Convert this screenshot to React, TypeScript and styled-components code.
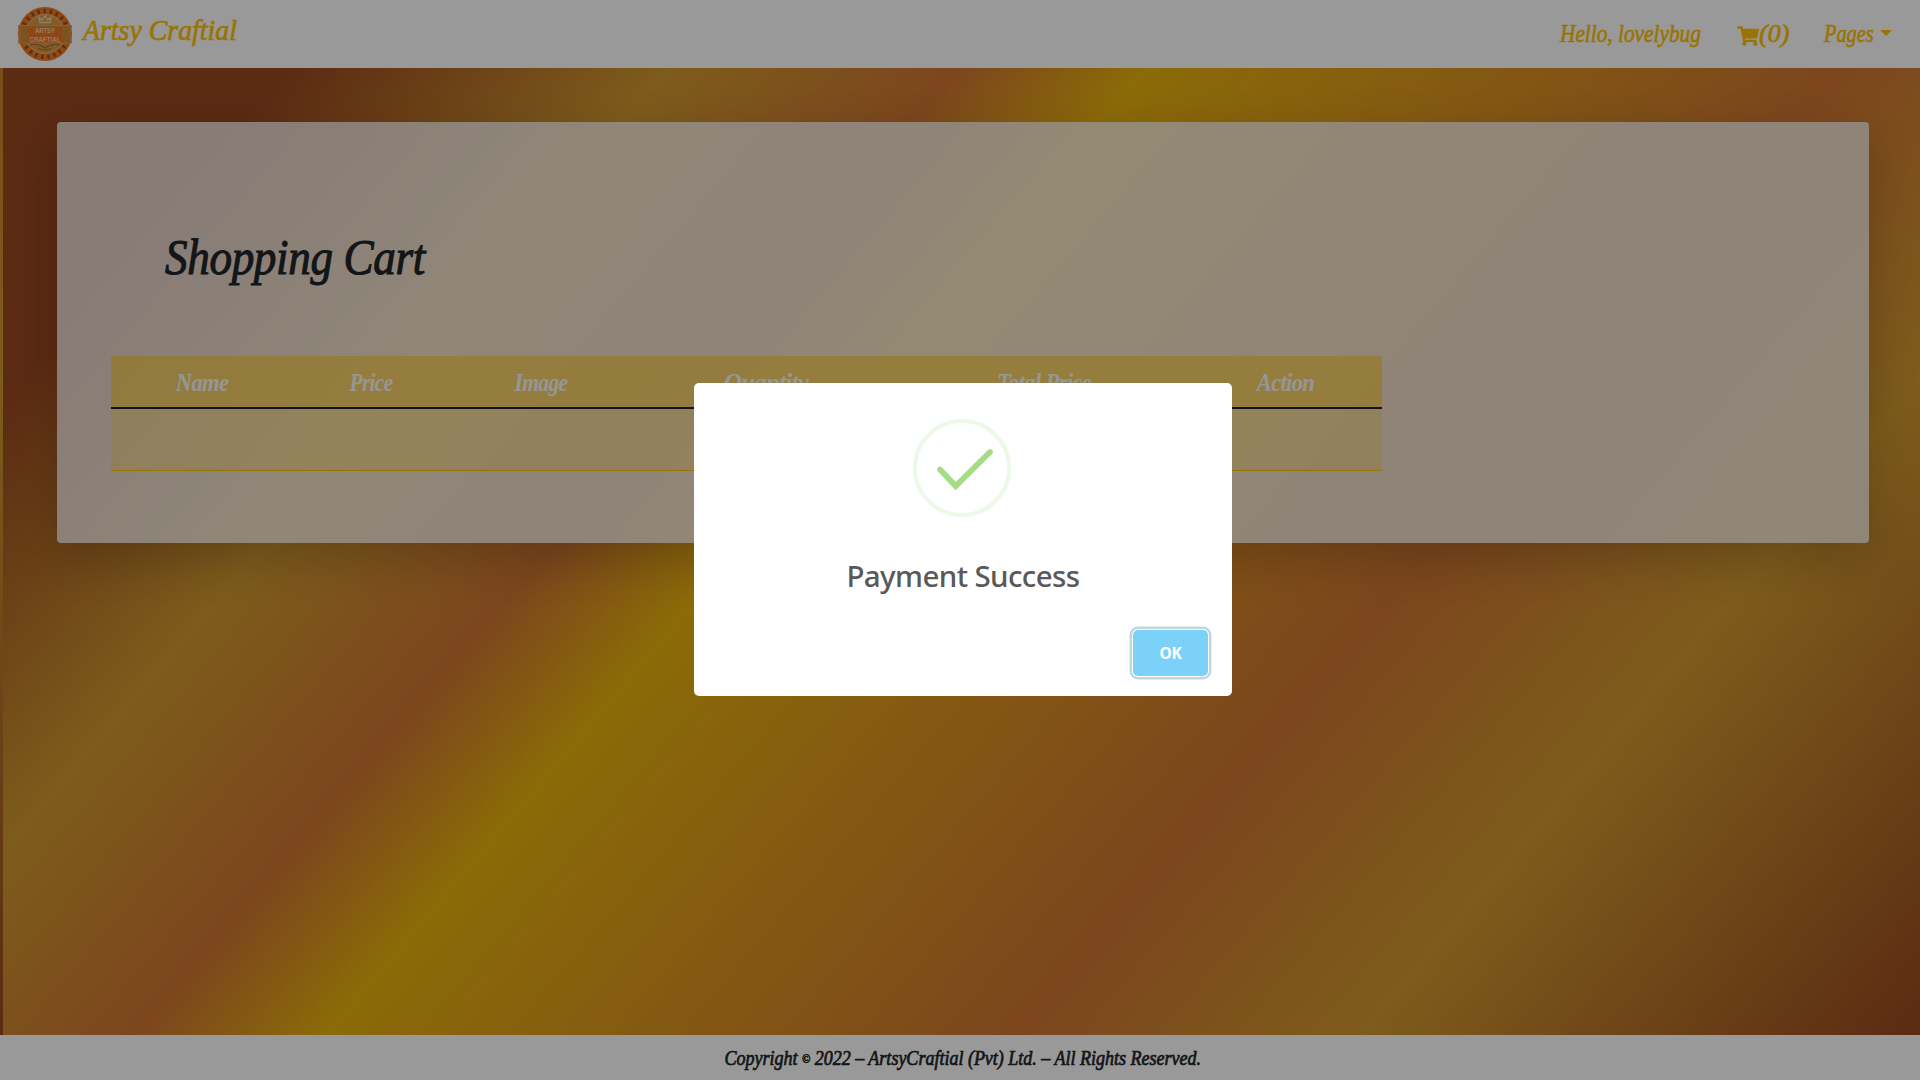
import React from "react";
import styled, { createGlobalStyle } from "styled-components";
import { FaShoppingCart } from "react-icons/fa";

const script = `"Liberation Serif", "Times New Roman", serif`;
const sans = `"Noto Sans", "Open Sans", sans-serif`;
const gold = "#ffc107";
const ink = "#212529";

const GlobalStyle = createGlobalStyle`
  *, *::before, *::after { box-sizing: border-box; }
  html, body { margin: 0; padding: 0; }
  body { overflow: hidden; font-family: ${script}; color: ${ink}; }
`;

const Page = styled.div`
  display: flex;
  flex-direction: column;
  height: 1080px;
  font-style: italic;
`;

const Navbar = styled.nav`
  display: flex;
  align-items: center;
  flex: 0 0 68px;
  padding: 0 28px 0 18px;
  background: #fff;
  color: ${gold};
`;

const Brand = styled.a`
  display: flex;
  align-items: center;
  gap: 11px;
  margin-right: auto;
`;

const Label = styled.span<{
  $size: number;
  $squeeze?: number;
  $width?: number;
  $lift?: number;
  $center?: boolean;
}>`
  display: block;
  width: ${(p) => (p.$width ? `${p.$width}px` : "auto")};
  margin-bottom: ${(p) => p.$lift ?? 0}px;
  font-size: ${(p) => p.$size}px;
  line-height: 1.2;
  white-space: nowrap;
  transform: scaleX(${(p) => p.$squeeze ?? 1});
  transform-origin: ${(p) => (p.$center ? "center" : "left")};
  -webkit-text-stroke: 0.7px currentColor;
`;

const NavItem = styled.a<{ $width: number }>`
  display: flex;
  align-items: center;
  width: ${(p) => p.$width}px;
`;

const CartIcon = styled(FaShoppingCart)`
  flex: none;
  margin-top: 3px;
`;

const Caret = styled.span`
  margin: 0 0 3px 7px;
  border-top: 6px solid ${gold};
  border-left: 6px solid transparent;
  border-right: 6px solid transparent;
`;

const Main = styled.main`
  flex: 1;
  padding: 54px 51px 0 57px;
  background: linear-gradient(
      130.4deg,
      #98481f 0%,
      #98481f 10.4%,
      #d2992f 24.3%,
      #cf7531 34.9%,
      #e8b20d 41.7%,
      #cf7531 67%,
      #d2992f 79.6%,
      #98481f 100%
    )
    3px 0 / 1917px 967px repeat;
`;

const Card = styled.section`
  height: 421px;
  padding: 102px 54px 0;
  border-radius: 4px;
  background: rgba(248, 246, 245, 0.78);
  box-shadow: 0 16px 48px rgba(0, 0, 0, 0.2);
`;

const Heading = styled.h1`
  height: 132px;
  margin: 0;
  padding: 2px 0 0 54px;
  font-size: 51px;
  font-weight: 400;
  line-height: 62px;
`;

const HeadingText = styled.span`
  display: inline-block;
  letter-spacing: -0.4px;
  transform: scaleX(0.885);
  transform-origin: left;
  -webkit-text-stroke: 1.1px currentColor;
`;

const columns = "182px 156px 184px 266px 290px 193px";

const Table = styled.div`
  width: 1271px;
`;

const HeadRow = styled.div`
  display: grid;
  grid-template-columns: ${columns};
  align-items: center;
  height: 53px;
  border-bottom: 2px solid ${ink};
  background: rgba(250, 200, 55, 0.66);
  color: #fafafa;
`;

const HeadCell = styled.div<{ $squeeze: number }>`
  padding-top: 2px;
  text-align: center;
  font-size: 26px;
  font-weight: 700;
  line-height: 50px;
  letter-spacing: -0.8px;
  transform: scaleX(${(p) => p.$squeeze});
`;

const BodyRow = styled.div`
  height: 62px;
  border-bottom: 1px solid ${gold};
  background: rgba(255, 208, 70, 0.34);
`;

const Footer = styled.footer`
  display: flex;
  align-items: center;
  justify-content: center;
  flex: 0 0 45px;
  padding-left: 5px;
  background: #fff;
`;

const Small = styled.span`
  font-size: 12px;
  vertical-align: 2px;
`;

const Overlay = styled.div`
  position: fixed;
  inset: 0;
  display: flex;
  align-items: center;
  justify-content: center;
  padding: 0 0 2px 6px;
  background: rgba(0, 0, 0, 0.4);
`;

const Modal = styled.div`
  display: flex;
  flex-direction: column;
  align-items: center;
  width: 538px;
  height: 313px;
  padding: 36px 24px 20px;
  border-radius: 5px;
  background: #fff;
  font-family: ${sans};
`;

const Title = styled.div`
  margin-top: 36px;
  font-size: 29.5px;
  font-weight: 500;
  line-height: 46px;
  letter-spacing: -0.6px;
  color: #595959;
`;

const OkButton = styled.button`
  align-self: flex-end;
  width: 75px;
  height: 46px;
  margin-top: auto;
  padding: 0;
  border: 0;
  border-radius: 5px;
  background: #7cd1f9;
  color: #fff;
  font: 700 15.5px ${sans};
  letter-spacing: -0.3px;
  box-shadow: 0 0 0 1px #fff, 0 0 0 3.4px rgba(43, 114, 165, 0.29);
`;

const Logo = () => (
  <svg width="54" height="54" viewBox="0 0 54 54">
    <circle cx="27" cy="27" r="27" fill="#f07a22" />
    <circle
      cx="27"
      cy="27"
      r="22.8"
      fill="none"
      stroke="#8f4f22"
      strokeWidth="4.5"
      strokeDasharray="2.2 4"
    />
    <circle cx="27" cy="27" r="19.5" fill="#d79a43" stroke="#e8bd84" strokeWidth="1" />
    <path d="M0 18.5H54L51.5 27L54 36H0L2.5 27Z" fill="#d08a3c" stroke="#dca768" strokeWidth=".8" />
    <path d="M9 21L45 20L43 27L46 35L9 35.5L11 28Z" fill="#ed7624" />
    <path d="M22 15.5L21 10.5L24.5 13L27 9L29.5 13L33 10.5L32 15.5Z" fill="none" stroke="#ead5b8" strokeWidth="1.3" />
    <path d="M12 38Q20 36 27 41Q34 36 42 38M20 41Q27 45 34 41" fill="none" stroke="#a96c2e" strokeWidth="1.2" />
    <g fill="#f3cfa8" fontFamily="Liberation Sans, sans-serif" fontStyle="normal" fontWeight="700" textAnchor="middle">
      <text x="27" y="26" fontSize="7.4" textLength="20" lengthAdjust="spacingAndGlyphs">ARTSY</text>
      <text x="27" y="34.6" fontSize="7.4" textLength="31" lengthAdjust="spacingAndGlyphs">CRAFTIAL</text>
    </g>
  </svg>
);

const IconSvg = styled.svg`
  flex: none;
  margin-right: 2px;
`;

const SuccessIcon = () => (
  <IconSvg width="98" height="98" viewBox="0 0 98 98">
    <circle cx="49" cy="49" r="47" fill="none" stroke="#edf8e7" strokeWidth="4" />
    <path d="M27 50.5L42.7 67L77 33" fill="none" stroke="#a5dc86" strokeWidth="5.8" strokeLinecap="round" />
  </IconSvg>
);

const headers = [
  { text: "Name", squeeze: 0.87 },
  { text: "Price", squeeze: 0.82 },
  { text: "Image", squeeze: 0.83 },
  { text: "Quantity", squeeze: 0.96 },
  { text: "Total Price", squeeze: 0.87 },
  { text: "Action", squeeze: 0.87 },
];

export default function App() {
  return (
    <>
      <GlobalStyle />
      <Page>
        <Navbar>
          <Brand>
            <Logo />
            <Label $size={29} $lift={8} $squeeze={0.96}>Artsy Craftial</Label>
          </Brand>
          <NavItem $width={177}>
            <Label $size={26} $squeeze={0.82}>Hello, lovelybug</Label>
          </NavItem>
          <NavItem $width={87}>
            <CartIcon size={22} />
            <Label $size={26}>(0)</Label>
          </NavItem>
          <NavItem $width={68}>
            <Label $size={26} $squeeze={0.78} $width={49}>Pages</Label>
            <Caret />
          </NavItem>
        </Navbar>
        <Main>
          <Card>
            <Heading>
              <HeadingText>Shopping Cart</HeadingText>
            </Heading>
            <Table>
              <HeadRow>
                {headers.map((h) => (
                  <HeadCell key={h.text} $squeeze={h.squeeze}>{h.text}</HeadCell>
                ))}
              </HeadRow>
              <BodyRow />
            </Table>
          </Card>
        </Main>
        <Footer>
          <Label $size={20} $squeeze={0.9} $center>
            Copyright <Small>©</Small> 2022 – ArtsyCraftial (Pvt) Ltd. – All Rights Reserved.
          </Label>
        </Footer>
      </Page>
      <Overlay>
        <Modal>
          <SuccessIcon />
          <Title>Payment Success</Title>
          <OkButton>OK</OkButton>
        </Modal>
      </Overlay>
    </>
  );
}
